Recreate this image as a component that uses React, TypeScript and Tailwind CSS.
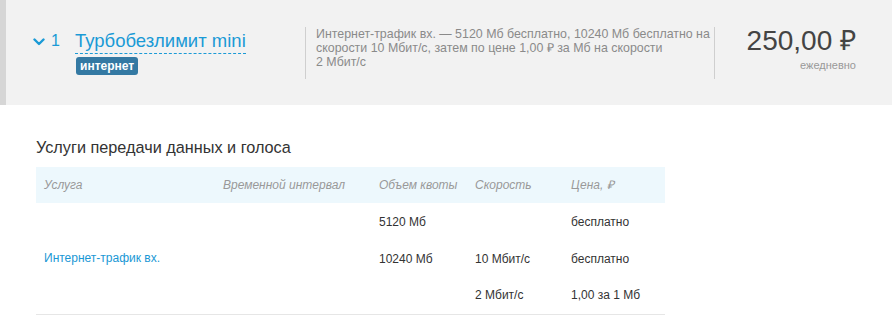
import React from "react";

const font = { fontFamily: '"Liberation Sans", Arial, sans-serif' };

export default function App() {
  return (
    <div className="w-[892px] h-[318px] bg-white overflow-hidden" style={font}>
      {/* Header panel */}
      <div className="h-[105px] bg-[#f2f2f2] border-l-[6px] border-[#d6d6d6] flex items-center">
        <div className="w-[299px] pl-[27px] flex items-start">
          <div className="flex items-center h-[22px] text-[#1a9ad6]">
            <svg width="12" height="8" viewBox="0 0 12 8" className="mr-[6px] mt-[2px]">
              <path d="M1.5 1.5 L6 6 L10.5 1.5" fill="none" stroke="#1a9ad6" strokeWidth="2.4" strokeLinecap="round" strokeLinejoin="round" />
            </svg>
            <span className="text-[16px] leading-none w-[24px]">1</span>
          </div>
          <div className="flex flex-col items-start">
            <span className="text-[18.5px] leading-[22px] text-[#1a9ad6] border-b border-dashed border-[#1a9ad6] pb-[1px]">
              Турбобезлимит mini
            </span>
            <span className="mt-[3px] ml-[1px] bg-[#3479a3] text-white text-[12px] font-bold leading-[18px] px-[4px] rounded-[3px]">
              интернет
            </span>
          </div>
        </div>
        <div className="h-[52px] border-l border-[#cfcfcf] w-[409px] pl-[10px]">
          <p className="text-[12.4px] leading-[14px] text-[#8a8a8a]">
            Интернет-трафик вх. — 5120 Мб бесплатно, 10240 Мб бесплатно на скорости 10 Мбит/с, затем по цене 1,00 ₽ за Мб на скорости
            <br />
            2 Мбит/с
          </p>
        </div>
        <div className="h-[52px] border-l border-[#cfcfcf] flex-1 flex flex-col items-end pr-[36px]">
          <span className="text-[28px] leading-[30px] text-[#444] -mt-[1px]">250,00 ₽</span>
          <span className="text-[11px] leading-[14px] text-[#999] mt-[2px]">ежедневно</span>
        </div>
      </div>

      {/* Section */}
      <div className="pl-[36px] pt-[32px]">
        <h2 className="text-[16.25px] leading-[20px] text-[#333] mb-[10px]">Услуги передачи данных и голоса</h2>
        <table className="w-[629px] border-collapse table-fixed text-[12px]">
          <colgroup>
            <col className="w-[179px]" />
            <col className="w-[156px]" />
            <col className="w-[96px]" />
            <col className="w-[96px]" />
            <col className="w-[102px]" />
          </colgroup>
          <thead>
            <tr className="bg-[#edf8fd] h-[36px]">
              <th className="text-left font-normal italic text-[#999] pl-[8px]">Услуга</th>
              <th className="text-left font-normal italic text-[#999] pl-[8px]">Временной интервал</th>
              <th className="text-left font-normal italic text-[#999] pl-[8px]">Объем квоты</th>
              <th className="text-left font-normal italic text-[#999] pl-[8px]">Скорость</th>
              <th className="text-left font-normal italic text-[#999] pl-[8px]">Цена, ₽</th>
            </tr>
          </thead>
          <tbody className="text-[#333]">
            <tr className="h-[37px]">
              <td rowSpan={3} className="pl-[8px] align-middle text-[#1a98d5] border-b border-[#e6e6e6]">Интернет-трафик вх.</td>
              <td rowSpan={3} className="border-b border-[#e6e6e6]"></td>
              <td className="pl-[8px]">5120 Мб</td>
              <td className="pl-[8px]"></td>
              <td className="pl-[8px]">бесплатно</td>
            </tr>
            <tr className="h-[37px]">
              <td className="pl-[8px]">10240 Мб</td>
              <td className="pl-[8px]">10 Мбит/с</td>
              <td className="pl-[8px]">бесплатно</td>
            </tr>
            <tr className="h-[37px] border-b border-[#e6e6e6]">
              <td className="pl-[8px]"></td>
              <td className="pl-[8px]">2 Мбит/с</td>
              <td className="pl-[8px]">1,00 за 1 Мб</td>
            </tr>
          </tbody>
        </table>
      </div>
    </div>
  );
}
